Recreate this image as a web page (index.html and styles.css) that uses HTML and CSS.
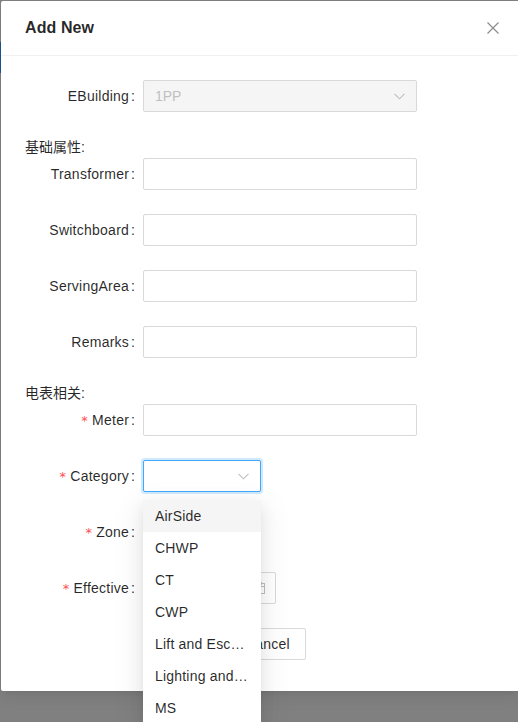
FILE: index.html
```html
<!DOCTYPE html>
<html>
<head>
<meta charset="utf-8">
<link rel="stylesheet" href="styles.css">
</head>
<body>
<div class="page">
  <div class="edge"><span class="edge-blue"></span></div>
  <div class="modal">
    <div class="modal-header">
      <div class="title">Add New</div>
      <div class="close">
        <svg width="12" height="12" viewBox="0 0 12 12"><path d="M0.5 0.5 L11.5 11.5 M11.5 0.5 L0.5 11.5" stroke="#8c8c8c" stroke-width="1.2" fill="none"/></svg>
      </div>
    </div>
    <div class="modal-body">
      <div class="row">
        <div class="label">EBuilding<span class="colon">:</span></div>
        <div class="control select disabled">
          <span class="value">1PP</span>
          <svg class="arrow" width="11" height="7" viewBox="0 0 11 7"><path d="M0.5 0.8 L5.5 5.8 L10.5 0.8" stroke="#bfbfbf" stroke-width="1.1" fill="none"/></svg>
        </div>
      </div>
      <div class="section">基础属性:</div>
      <div class="row">
        <div class="label">Transformer<span class="colon">:</span></div>
        <div class="control input"></div>
      </div>
      <div class="row">
        <div class="label">Switchboard<span class="colon">:</span></div>
        <div class="control input"></div>
      </div>
      <div class="row">
        <div class="label">ServingArea<span class="colon">:</span></div>
        <div class="control input"></div>
      </div>
      <div class="row">
        <div class="label">Remarks<span class="colon">:</span></div>
        <div class="control input"></div>
      </div>
      <div class="section">电表相关:</div>
      <div class="row">
        <div class="label"><span class="req">*</span>Meter<span class="colon">:</span></div>
        <div class="control input"></div>
      </div>
      <div class="row">
        <div class="label"><span class="req">*</span>Category<span class="colon">:</span></div>
        <div class="control select focused short">
          <svg class="arrow" width="11" height="7" viewBox="0 0 11 7"><path d="M0.5 0.8 L5.5 5.8 L10.5 0.8" stroke="#bfbfbf" stroke-width="1.1" fill="none"/></svg>
          <div class="dropdown">
            <div class="option active">AirSide</div>
            <div class="option">CHWP</div>
            <div class="option">CT</div>
            <div class="option">CWP</div>
            <div class="option">Lift and Escalator</div>
            <div class="option">Lighting and Power</div>
            <div class="option">MS</div>
          </div>
        </div>
      </div>
      <div class="row">
        <div class="label"><span class="req">*</span>Zone<span class="colon">:</span></div>
        <div class="control select short"></div>
      </div>
      <div class="row">
        <div class="label"><span class="req">*</span>Effective<span class="colon">:</span></div>
        <div class="control date">
          <svg class="cal" width="12" height="12" viewBox="0 0 12 12"><rect x="0.5" y="1.5" width="11" height="10" fill="none" stroke="#bfbfbf"/><path d="M0.5 4.5 H11.5 M3.5 0 V3 M8.5 0 V3" stroke="#bfbfbf" fill="none"/></svg>
        </div>
      </div>
      <div class="row buttons">
        <button class="btn primary">Submit</button>
        <button class="btn cancel">Cancel</button>
      </div>
    </div>
  </div>
</div>
</body>
</html>
```
FILE: styles.css
```css
html, body {
  margin: 0;
  padding: 0;
}
body {
  width: 518px;
  height: 722px;
  overflow: hidden;
  background: #808080;
  font-family: "Liberation Sans", Arial, "Noto Sans CJK SC", sans-serif;
  font-size: 14px;
  color: rgba(0, 0, 0, 0.85);
}
.page {
  display: flex;
  padding-top: 1px;
  position: relative;
}
.edge {
  width: 1px;
  flex: none;
  position: relative;
}
.edge-blue {
  position: absolute;
  left: 0;
  top: 41px;
  width: 1px;
  height: 31px;
  background: #1a4f8f;
}
.modal {
  width: 520px;
  height: 690px;
  flex: none;
  background: #fff;
  border-radius: 2px;
  box-shadow: 0 3px 6px -4px rgba(0,0,0,.12), 0 6px 16px 0 rgba(0,0,0,.08);
}
.modal-header {
  height: 54px;
  border-bottom: 1px solid #f0f0f0;
  display: flex;
  align-items: center;
  justify-content: space-between;
  padding-left: 24px;
}
.title {
  font-size: 16px;
  font-weight: 700;
  line-height: 22px;
  letter-spacing: 0.1px;
  color: rgba(0, 0, 0, 0.85);
}
.close {
  width: 56px;
  height: 54px;
  display: flex;
  align-items: center;
  justify-content: center;
}
.modal-body {
  padding: 24px;
}
.row {
  display: flex;
  align-items: center;
  height: 32px;
  margin-bottom: 24px;
}
.label {
  width: 118px;
  flex: none;
  text-align: right;
  line-height: 32px;
  white-space: nowrap;
  letter-spacing: 0.25px;
}
.colon {
  margin: 0 8px 0 2px;
  letter-spacing: 0;
}
.req {
  color: #ff4d4f;
  margin-right: 4px;
  font-family: "DejaVu Sans", sans-serif;
  font-size: 13px;
}
.section {
  line-height: 22px;
  height: 22px;
}
.control {
  box-sizing: border-box;
  height: 32px;
  border: 1px solid #d9d9d9;
  border-radius: 2px;
  background: #fff;
  position: relative;
  display: flex;
  align-items: center;
}
.input, .select {
  width: 274px;
}
.select.short {
  width: 118px;
}
.date {
  width: 133px;
}
.disabled {
  background: #f5f5f5;
}
.value {
  padding-left: 11px;
  color: #bfbfbf;
}
.arrow {
  position: absolute;
  right: 11px;
  top: 12px;
}
.cal {
  position: absolute;
  right: 10px;
  top: 9px;
}
.focused {
  border-color: #40a9ff;
  box-shadow: 0 0 0 2px rgba(24, 144, 255, 0.2);
}
.dropdown {
  position: absolute;
  left: -1px;
  top: 39px;
  width: 118px;
  background: #fff;
  border-radius: 2px;
  box-shadow: 0 3px 6px -4px rgba(0,0,0,.12), 0 6px 16px 0 rgba(0,0,0,.08), 0 9px 28px 8px rgba(0,0,0,.05);
  z-index: 10;
}
.option {
  height: 32px;
  line-height: 32px;
  padding: 0 12px;
  white-space: nowrap;
  overflow: hidden;
  text-overflow: ellipsis;
  letter-spacing: 0.2px;
}
.option.active {
  background: #f5f5f5;
}
.buttons {
  padding-left: 118px;
  margin-bottom: 0;
}
.btn {
  height: 32px;
  padding: 0 15px;
  border: 1px solid #d9d9d9;
  border-radius: 2px;
  background: #fff;
  font-family: inherit;
  font-size: 14px;
  color: rgba(0, 0, 0, 0.85);
  margin-right: 8px;
  letter-spacing: 0.2px;
}
.btn.primary {
  background: #1890ff;
  border-color: #1890ff;
  color: #fff;
  width: 78px;
}
```
